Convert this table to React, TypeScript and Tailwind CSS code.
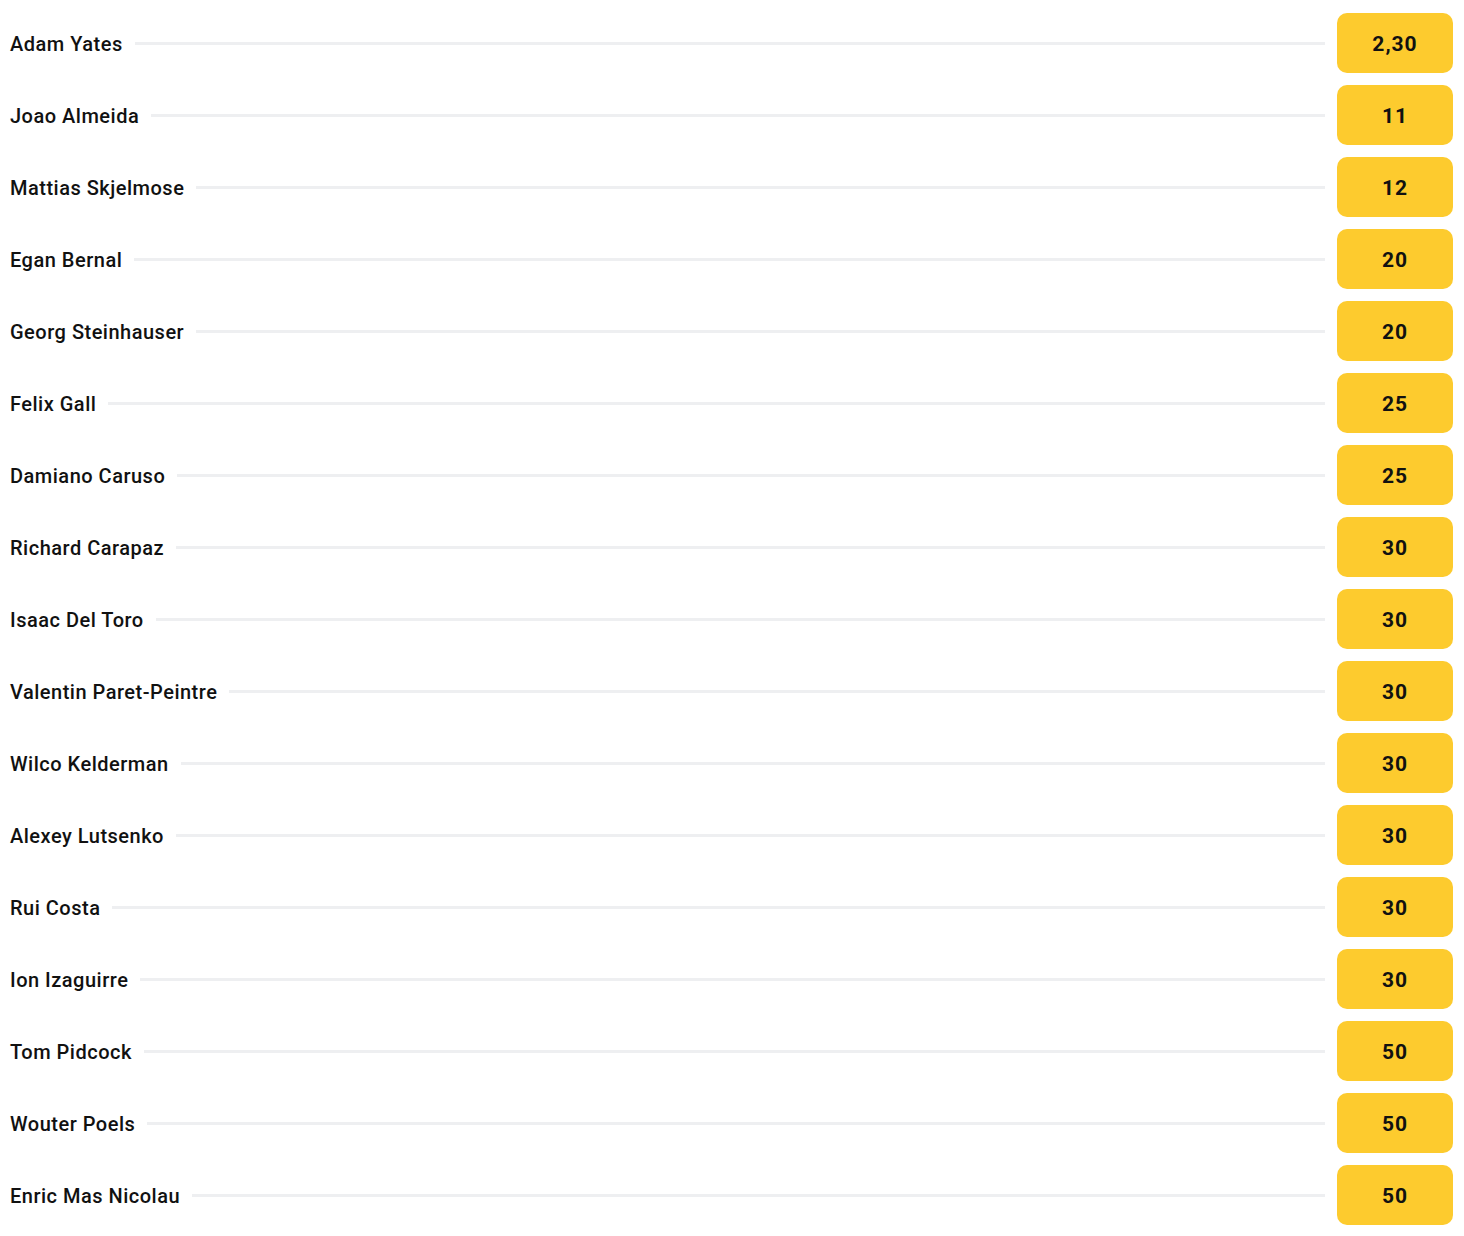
import React from "react";

const rows: [string, string][] = [
  ["Adam Yates", "2,30"],
  ["Joao Almeida", "11"],
  ["Mattias Skjelmose", "12"],
  ["Egan Bernal", "20"],
  ["Georg Steinhauser", "20"],
  ["Felix Gall", "25"],
  ["Damiano Caruso", "25"],
  ["Richard Carapaz", "30"],
  ["Isaac Del Toro", "30"],
  ["Valentin Paret-Peintre", "30"],
  ["Wilco Kelderman", "30"],
  ["Alexey Lutsenko", "30"],
  ["Rui Costa", "30"],
  ["Ion Izaguirre", "30"],
  ["Tom Pidcock", "50"],
  ["Wouter Poels", "50"],
  ["Enric Mas Nicolau", "50"],
];

export default function App() {
  return (
    <div
      className="w-[1464px] min-h-[1236px] bg-white pt-[13px] pl-[10px] pr-[11px] flex flex-col gap-[12px]"
      style={{ fontFamily: "Roboto, 'Liberation Sans', sans-serif" }}
    >
      {rows.map(([name, odd], i) => (
        <div key={i} className="flex items-center h-[60px]">
          <span className="text-[20px] font-medium text-[#111] leading-none tracking-[0.5px] whitespace-nowrap pt-[2px]">
            {name}
          </span>
          <div className="flex-1 h-[3px] bg-[#eeeff1] ml-[12px] mr-[12px]" />
          <div className="w-[116px] h-[60px] rounded-[10px] bg-[#fdcb2e] flex items-center justify-center text-[21px] font-bold text-[#111] tracking-[1px] leading-none pt-[3px]">
            {odd}
          </div>
        </div>
      ))}
    </div>
  );
}
